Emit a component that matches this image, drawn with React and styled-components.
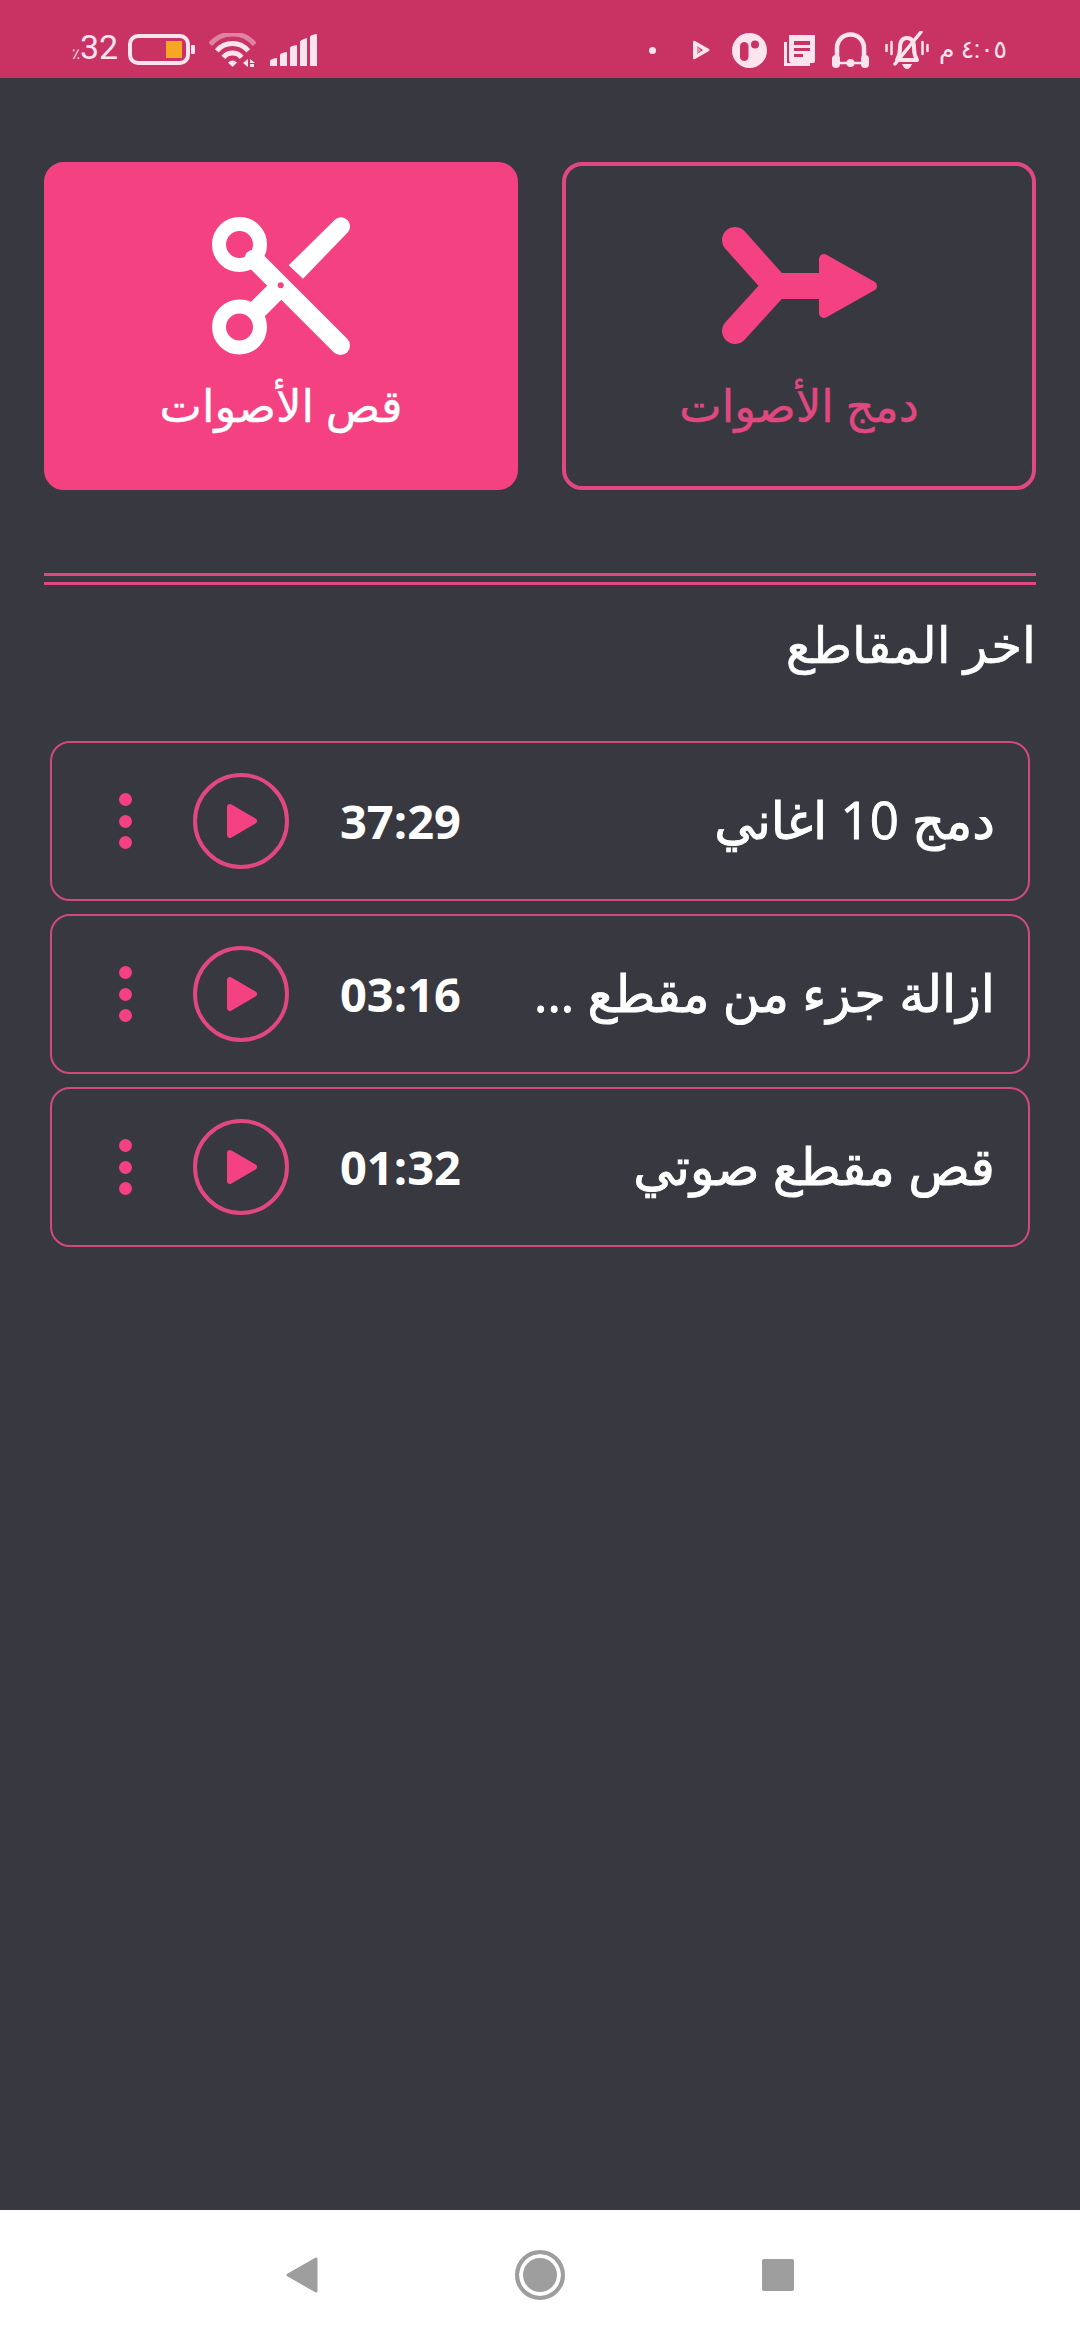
import React from "react";
import styled, { createGlobalStyle } from "styled-components";

const GlobalStyle = createGlobalStyle`
  html, body {
    margin: 0;
    padding: 0;
    background: #383841;
  }
  * {
    box-sizing: border-box;
  }
`;

const pink = "#f44181";
const line = "#e0487f";
const barInk = "#fce4ee";

const clips = [
  { name: "دمج 10 اغاني", time: "37:29" },
  { name: "ازالة جزء من مقطع ...", time: "03:16" },
  { name: "قص مقطع صوتي", time: "01:32" },
];

const App = () => {
  return (
    <>
      <GlobalStyle />
      <Screen>
        <StatusBar>
          <StatusGroup>
            <Battery>
              <Percent>٪</Percent>32
            </Battery>
            <BarIcon $left={10} width="67" height="32" viewBox="0 0 67 32">
              <rect x="2" y="2" width="58" height="27" rx="8" fill="none" stroke={barInk} strokeWidth="4" />
              <rect x="38" y="7" width="16" height="17" fill="#f5a623" />
              <rect x="63" y="11" width="4" height="9" rx="1" fill={barInk} />
            </BarIcon>
            <BarIcon $left={14} width="47" height="35" viewBox="0 0 47 35">
              <g fill="none" stroke={barInk} strokeWidth="5">
                <path d="M1.3 11.4A29 29 0 0 1 45.7 11.4" opacity="0.45" />
                <path d="M7.8 17.8A20.5 20.5 0 0 1 39.2 17.8" />
                <path d="M14.3 24.3A12 12 0 0 1 32.7 24.3" />
              </g>
              <path d="M19 29.5Q23.5 25.5 28 29.5L23.5 34Z" fill={barInk} />
              <path d="M34 30L39 26V34ZM41 26L46 30H41ZM41 34V31H45V34Z" fill={barInk} />
            </BarIcon>
            <BarIcon $left={14} width="47" height="32" viewBox="0 0 47 32">
              <path d="M0 32V27Q0 25 7 24V32Z" fill={barInk} />
              <path d="M10 32V21Q10 19 17 18V32Z" fill={barInk} />
              <path d="M20 32V14Q20 12 27 11V32Z" fill={barInk} />
              <path d="M30 32V8Q30 6 37 4V32Z" fill={barInk} />
              <path d="M40 32V3Q40 1 47 0V32Z" fill={barInk} />
            </BarIcon>
          </StatusGroup>
          <StatusGroup>
            <Dot />
            <BarIcon $left={36} width="18" height="20" viewBox="0 0 18 20">
              <path d="M1 2Q1 0 3 1L17 9Q18 10 17 11L3 19Q1 20 1 18ZM5 6V14L11 10Z" fill={barInk} />
              <path d="M4 5L9 10L4 15Z" fill={barInk} opacity="0.55" />
            </BarIcon>
            <BarIcon $left={22} width="35" height="35" viewBox="0 0 35 35">
              <circle cx="17.5" cy="17.5" r="17.5" fill={barInk} />
              <rect x="8" y="9" width="8.5" height="19" rx="4.25" fill="#c93364" />
              <circle cx="23" cy="11.5" r="4" fill="#c93364" />
            </BarIcon>
            <BarIcon $left={17} width="31" height="31" viewBox="0 0 31 31">
              <path d="M5 0H31V26Q31 28 29 28H8Q5 28 5 25ZM10 6V10H26V6ZM10 13V16H26V13ZM10 19V22H19V19Z" fill={barInk} fillRule="evenodd" />
              <path d="M1.5 7V29.5H26" fill="none" stroke={barInk} strokeWidth="3" />
            </BarIcon>
            <BarIcon $left={17} width="37" height="36" viewBox="0 0 37 36">
              <path d="M5 26V16A13.5 13.5 0 0 1 32 16V26" fill="none" stroke={barInk} strokeWidth="4.5" />
              <rect x="0" y="23" width="8" height="13" rx="4" fill={barInk} />
              <rect x="29" y="23" width="8" height="13" rx="4" fill={barInk} />
              <circle cx="18.5" cy="31" r="4" fill={barInk} />
              <path d="M8 31H30" stroke={barInk} strokeWidth="2.5" />
            </BarIcon>
            <BarIcon $left={16} width="44" height="39" viewBox="0 0 44 39">
              <g fill="none" stroke={barInk} strokeLinecap="round">
                <path d="M1.5 14V20M6.5 11V23M37.5 11V23M42.5 14V20" strokeWidth="2.5" />
                <path d="M12 29Q15 24 15 17Q15 7 22 7Q29 7 29 17Q29 24 32 29Z" strokeWidth="4" strokeLinejoin="round" />
                <path d="M36 1L10 33" strokeWidth="3.5" />
              </g>
              <path d="M17 33H27Q25 38 22 38Q19 38 17 33Z" fill={barInk} />
            </BarIcon>
            <Clock dir="rtl">٤:٠٥ م</Clock>
          </StatusGroup>
        </StatusBar>

        <Main dir="rtl">
          <Actions>
            <ActionCard>
              <IconSlot>
                <svg width="155" height="117" viewBox="0 0 155 117">
                  <path d="M13 13L54 59L13 104" fill="none" stroke={pink} strokeWidth="26" strokeLinecap="round" strokeLinejoin="round" />
                  <path d="M50 46H100V72H50Z" fill={pink} />
                  <path d="M102 32L150 59L102 86Z" fill={pink} stroke={pink} strokeWidth="10" strokeLinejoin="round" />
                </svg>
              </IconSlot>
              <ActionLabel>دمج الأصوات</ActionLabel>
            </ActionCard>
            <ActionCard $filled>
              <IconSlot>
                <svg width="138" height="138" viewBox="0 0 138 138">
                  <g fill="none" stroke="#fff">
                    <circle cx="27.5" cy="27.5" r="20.5" strokeWidth="14" />
                    <circle cx="27.5" cy="110" r="20.5" strokeWidth="14" />
                    <path d="M42 42L128.5 128.5" strokeWidth="19" strokeLinecap="round" />
                    <path d="M42 96L69 69" strokeWidth="20" />
                  </g>
                  <path d="M76.7 48.3L122.6 2.9A9 9 0 0 1 135.4 15.7L91 61.7Z" fill="#fff" />
                  <circle cx="68.7" cy="68.3" r="3" fill={pink} />
                </svg>
              </IconSlot>
              <ActionLabel $filled>قص الأصوات</ActionLabel>
            </ActionCard>
          </Actions>

          <Divider />
          <SectionTitle>اخر المقاطع</SectionTitle>

          <ClipList>
            {clips.map((clip) => (
              <ClipRow key={clip.time}>
                <ClipName>{clip.name}</ClipName>
                <ClipTime dir="ltr">{clip.time}</ClipTime>
                <PlayButton>
                  <svg width="32" height="38" viewBox="0 0 32 38">
                    <path d="M4 5L28 19L4 33Z" fill={pink} stroke={pink} strokeWidth="6" strokeLinejoin="round" />
                  </svg>
                </PlayButton>
                <MoreDots>
                  <i />
                  <i />
                  <i />
                </MoreDots>
              </ClipRow>
            ))}
          </ClipList>
        </Main>

        <NavBar>
          <svg width="32" height="36" viewBox="0 0 32 36">
            <path d="M30 2V34L2 18Z" fill="#9e9e9e" stroke="#9e9e9e" strokeWidth="3" strokeLinejoin="round" />
          </svg>
          <HomeRing />
          <NavSquare />
        </NavBar>
      </Screen>
    </>
  );
};

const Screen = styled.div`
  width: 1080px;
  height: 2340px;
  display: flex;
  flex-direction: column;
  background: #383841;
  font-family: "Open Sans", "DejaVu Sans", sans-serif;
  overflow: hidden;
`;

const StatusBar = styled.div`
  height: 78px;
  flex: none;
  display: flex;
  justify-content: space-between;
  align-items: center;
  padding: 22px 73px 0 72px;
  background: #c93364;
  color: ${barInk};
`;

const StatusGroup = styled.div`
  display: flex;
  align-items: center;
`;

const BarIcon = styled.svg`
  margin-left: ${(p) => p.$left}px;
`;

const Battery = styled.span`
  font-family: Roboto, sans-serif;
  font-size: 34px;
  line-height: 34px;
`;

const Percent = styled.span`
  font-size: 15px;
`;

const Dot = styled.span`
  width: 7px;
  height: 7px;
  border-radius: 50%;
  background: ${barInk};
`;

const Clock = styled.span`
  margin-left: 10px;
  font-family: Roboto, "DejaVu Sans", sans-serif;
  font-size: 25px;
  line-height: 34px;
  white-space: nowrap;
`;

const Main = styled.main`
  flex: 1;
  padding: 84px 44px 0;
`;

const Actions = styled.div`
  display: grid;
  grid-template-columns: 474px 474px;
  gap: 44px;
`;

const ActionCard = styled.div`
  height: 328px;
  display: flex;
  flex-direction: column;
  align-items: center;
  border: 4px solid ${(p) => (p.$filled ? pink : line)};
  border-radius: 20px;
  background: ${(p) => (p.$filled ? pink : "transparent")};
`;

const IconSlot = styled.div`
  height: 217px;
  padding-top: 22px;
  display: flex;
  align-items: center;
  justify-content: center;
`;

const ActionLabel = styled.div`
  font-size: 45px;
  line-height: 44px;
  font-weight: 500;
  -webkit-text-stroke: 0.4px currentColor;
  color: ${(p) => (p.$filled ? "#fff" : line)};
`;

const Divider = styled.div`
  height: 12px;
  margin-top: 83px;
  border-top: 3px solid ${line};
  border-bottom: 3px solid ${line};
`;

const SectionTitle = styled.h2`
  margin: 27px 0 0;
  font-size: 50px;
  line-height: 64px;
  font-weight: 500;
  -webkit-text-stroke: 0.6px currentColor;
  color: #fff;
`;

const ClipList = styled.div`
  display: flex;
  flex-direction: column;
  gap: 13px;
  margin: 65px 6px 0;
`;

const ClipRow = styled.div`
  height: 160px;
  display: flex;
  align-items: center;
  padding: 0 33px 0 67px;
  border: 2px solid #d04a7a;
  border-radius: 20px;
`;

const ClipName = styled.div`
  flex: 1;
  padding-bottom: 4px;
  font-size: 51px;
  line-height: 64px;
  font-weight: 500;
  -webkit-text-stroke: 0.9px currentColor;
  color: #fff;
  white-space: nowrap;
`;

const ClipTime = styled.div`
  font-size: 47px;
  font-weight: 700;
  color: #fff;
  margin-left: 51px;
`;

const PlayButton = styled.div`
  width: 96px;
  height: 96px;
  display: flex;
  align-items: center;
  justify-content: center;
  border: 4px solid ${line};
  border-radius: 50%;
  margin-left: 61px;
  padding-left: 2px;
`;

const MoreDots = styled.div`
  display: flex;
  flex-direction: column;
  gap: 8.5px;
  & > i {
    width: 13px;
    height: 13px;
    border-radius: 50%;
    background: ${pink};
  }
`;

const NavBar = styled.div`
  height: 130px;
  flex: none;
  display: grid;
  grid-template-columns: repeat(3, 238px);
  justify-content: center;
  justify-items: center;
  align-items: center;
  background: #fff;
`;

const HomeRing = styled.div`
  width: 50px;
  height: 50px;
  border-radius: 50%;
  border: 4px solid #9e9e9e;
  background: #9e9e9e;
  box-shadow: inset 0 0 0 4px #fff;
`;

const NavSquare = styled.div`
  width: 32px;
  height: 32px;
  border-radius: 2px;
  background: #9e9e9e;
`;

export default App;
